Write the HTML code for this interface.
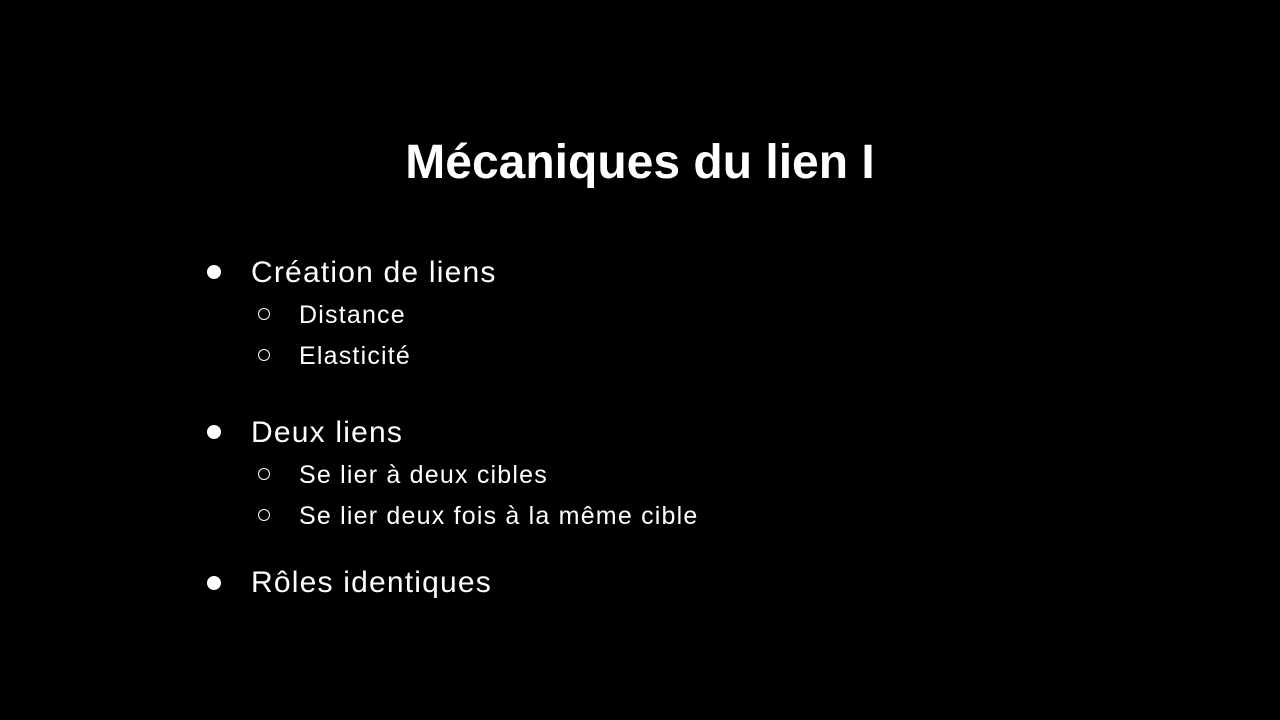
<!DOCTYPE html>
<html><head><meta charset="utf-8"><style>
body{margin:0;width:1280px;height:720px;background:#000;overflow:hidden;position:relative;font-family:"Liberation Sans",sans-serif;color:#fff}
.t{position:absolute;line-height:1;white-space:nowrap}
.l1{font-size:30px;letter-spacing:1.2px}
.l2{font-size:25px;letter-spacing:1.2px}
.d{position:absolute;width:14px;height:14px;border-radius:50%;background:#fff}
.c{position:absolute;width:10px;height:10px;border-radius:50%;border:1.5px solid #fff}
</style></head><body>
<div class="t" style="left:0;width:1280px;text-align:center;top:139px;font-size:48px;font-weight:bold;">Mécaniques du lien I</div>

<div class="d" style="left:207px;top:265px"></div>
<div class="t l1" style="left:251px;top:258px">Création de liens</div>
<div class="c" style="left:258px;top:308px"></div>
<div class="t l2" style="left:299px;top:303px">Distance</div>
<div class="c" style="left:258px;top:349px"></div>
<div class="t l2" style="left:299px;top:344px">Elasticité</div>

<div class="d" style="left:207px;top:425px"></div>
<div class="t l1" style="left:251px;top:418px">Deux liens</div>
<div class="c" style="left:258px;top:468px"></div>
<div class="t l2" style="left:299px;top:463px">Se lier à deux cibles</div>
<div class="c" style="left:258px;top:509px"></div>
<div class="t l2" style="left:299px;top:504px">Se lier deux fois à la même cible</div>

<div class="d" style="left:207px;top:576px"></div>
<div class="t l1" style="left:251px;top:568px">Rôles identiques</div>
</body></html>
